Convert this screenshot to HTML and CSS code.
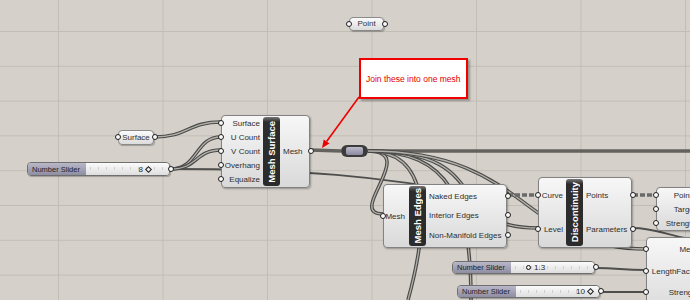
FILE: index.html
```html
<!DOCTYPE html>
<html lang="en">
<head>
  <meta charset="UTF-8" />
  <meta name="viewport" content="width=device-width, initial-scale=1.0" />
  <title>Mesh Definition</title>
  <link rel="stylesheet" href="styles.css">
</head>
<body>

  <div class="canvas">

    <!-- wires sit under the components -->
    <svg class="wires" width="690" height="300" viewBox="0 0 690 300">
      <defs>
        <path id="w-surface" d="M154,137 C188,137 188,122 221,122" />
        <path id="w-ucount" d="M171,169 C198,169 195,137 221,137" />
        <path id="w-vcount" d="M171,169 C198,169 195,150 221,150" />
        <path id="w-edges-in" d="M368,151 C420,151 345,214 383,214" />
        <path id="w-down-a" d="M368,151 C430,151 430,220 408,300" />
        <path id="w-down-b" d="M368,151 C450,151 471,200 471,300" />
        <path id="w-level" d="M368,151 C500,151 440,228 538,228" />
        <path id="w-mes" d="M368,151 C530,151 520,249 646,249" />
      </defs>

      <path class="single" d="M171,169 C300,169 380,176 480,195" />
      <path class="thick" d="M310,150 L341,151" />
      <path class="thick" d="M368,151 L690,151" />

      <use href="#w-surface" class="list-out" />
      <use href="#w-surface" class="list-in" />
      <use href="#w-ucount" class="list-out" />
      <use href="#w-ucount" class="list-in" />
      <use href="#w-vcount" class="list-out" />
      <use href="#w-vcount" class="list-in" />
      <use href="#w-edges-in" class="list-out" />
      <use href="#w-edges-in" class="list-in" />
      <use href="#w-down-a" class="list-out" />
      <use href="#w-down-a" class="list-in" />
      <use href="#w-down-b" class="list-out" />
      <use href="#w-down-b" class="list-in" />
      <use href="#w-level" class="list-out" />
      <use href="#w-level" class="list-in" />
      <use href="#w-mes" class="list-out" />
      <use href="#w-mes" class="list-in" />

      <path class="tree" d="M508,195 L537,195" />
      <path class="tree" d="M633,195 L655,195" />
      <path class="single" d="M632,228 C660,228 670,238 700,240" />
      <path class="single" d="M595,268 C620,268 620,270 646,270" />
      <path class="single" d="M600,292 L646,292" />
    </svg>

    <div class="param param-point">Point</div>
    <div class="param param-surface">Surface</div>

    <div class="slider slider-count">
      <div class="slider-label">Number Slider</div>
      <div class="slider-track track-right pad-wide">
        <span class="slider-value">8</span><span class="mark-diamond"></span>
      </div>
    </div>

    <div class="comp mesh-surface">
      <div class="ins">
        <div class="port">Surface</div>
        <div class="port">U Count</div>
        <div class="port">V Count</div>
        <div class="port">Overhang</div>
        <div class="port">Equalize</div>
      </div>
      <div class="nick"><span>Mesh Surface</span></div>
      <div class="outs">
        <div class="port">Mesh</div>
      </div>
    </div>

    <div class="relay"></div>

    <div class="comp mesh-edges">
      <div class="ins">
        <div class="port">Mesh</div>
      </div>
      <div class="nick"><span>Mesh Edges</span></div>
      <div class="outs">
        <div class="port">Naked Edges</div>
        <div class="port">Interior Edges</div>
        <div class="port">Non-Manifold Edges</div>
      </div>
    </div>

    <div class="comp discontinuity">
      <div class="ins">
        <div class="port">Curve</div>
        <div class="port">Level</div>
      </div>
      <div class="nick"><span>Discontinuity</span></div>
      <div class="outs">
        <div class="port">Points</div>
        <div class="port">Parameters</div>
      </div>
    </div>

    <div class="comp attractor">
      <div class="ins">
        <div class="port">Points</div>
        <div class="port">Target</div>
        <div class="port">Strength</div>
      </div>
      <div class="nick"></div>
    </div>

    <div class="comp smooth">
      <div class="ins">
        <div class="port">Mesh</div>
        <div class="port">LengthFactor</div>
        <div class="port">Strength</div>
      </div>
      <div class="nick"></div>
    </div>

    <div class="slider slider-length">
      <div class="slider-label">Number Slider</div>
      <div class="slider-track track-left">
        <span class="mark-circle"></span><span class="slider-value">1.3</span>
      </div>
    </div>

    <div class="slider slider-strength">
      <div class="slider-label">Number Slider</div>
      <div class="slider-track track-right">
        <span class="slider-value">10</span><span class="mark-diamond"></span>
      </div>
    </div>

    <div class="note">Join these into one mesh</div>

    <svg class="arrow" width="690" height="300" viewBox="0 0 690 300">
      <line x1="359" y1="97" x2="326.6" y2="141.5" />
      <polygon points="322,148 329.5,143.5 323.7,139.5" />
    </svg>

  </div>

</body>
</html>
```

FILE: styles.css
```css
html, body {
  margin: 0;
  padding: 0;
  overflow: hidden;
}

body {
  font-family: "Liberation Sans", Arial, sans-serif;
  color: #262626;
}

.canvas {
  position: relative;
  width: 690px;
  height: 300px;
  overflow: hidden;
  background-color: #d5d1ca;
  background-image:
    linear-gradient(to right, #c2beb6 1px, transparent 1px),
    linear-gradient(to bottom, #c2beb6 1px, transparent 1px);
  background-size: 104.5px 100%, 100% 34.8px;
  background-position: 58px 0, 0 31px;
}

/* wires */
.wires, .arrow {
  position: absolute;
  left: 0;
  top: 0;
}

.wires path, .wires use {
  fill: none;
}

.list-out {
  stroke: #4a4a4a;
  stroke-width: 3.6;
}

.list-in {
  stroke: #b3b0a9;
  stroke-width: 1.3;
}

.single {
  stroke: #4e4e4e;
  stroke-width: 1.8;
}

.thick {
  stroke: #64625e;
  stroke-width: 3.4;
}

.tree {
  stroke: #6a6a6a;
  stroke-width: 3.4;
  stroke-dasharray: 5 2;
}

.arrow {
  z-index: 5;
}

.arrow line {
  stroke: #f00000;
  stroke-width: 1.6;
}

.arrow polygon {
  fill: #f00000;
}

/* grips */
.port, .param {
  position: relative;
}

.ins .port::before,
.outs .port::after,
.param::before,
.param::after,
.slider::after {
  content: "";
  position: absolute;
  top: 50%;
  width: 4px;
  height: 4px;
  margin-top: -3.5px;
  border: 1.5px solid #1e1e1e;
  border-radius: 50%;
  background: #fafafa;
}

.ins .port::before,
.param::before {
  left: -4.5px;
}

.outs .port::after,
.param::after,
.slider::after {
  right: -4.5px;
}

/* parameters */
.param {
  position: absolute;
  box-sizing: border-box;
  height: 14px;
  border: 1px solid #8a8a8a;
  border-radius: 4px;
  background: linear-gradient(#fbfbfb, #dcdcdc);
  box-shadow: 1px 1px 1px rgba(0, 0, 0, 0.25);
  font-size: 8px;
  line-height: 12px;
  text-align: center;
  color: #333;
}

.param-point {
  left: 349px;
  top: 17px;
  width: 35px;
}

.param-surface {
  left: 118px;
  top: 130px;
  width: 36px;
  height: 15px;
  line-height: 13px;
}

/* components */
.comp {
  position: absolute;
  box-sizing: border-box;
  display: flex;
  border: 1px solid #828282;
  border-radius: 4px;
  background: linear-gradient(#f7f7f7, #d9d9d9);
  box-shadow: 1px 1px 2px rgba(0, 0, 0, 0.3);
  font-size: 8px;
  color: #2e2e2e;
}

.ins, .outs {
  display: flex;
  flex-direction: column;
}

.ins .port, .outs .port {
  flex: 1;
  display: flex;
  align-items: center;
  white-space: nowrap;
}

.ins .port {
  justify-content: flex-end;
  padding-right: 3px;
}

.outs {
  flex: 1;
}

.outs .port {
  padding-left: 3px;
}

.nick {
  width: 17px;
  margin: 1px 0;
  border-radius: 3px;
  background: linear-gradient(#777 0, #2d2d2d 5px, #2b2b2b 100%);
  display: flex;
  align-items: center;
  justify-content: center;
}

.nick span {
  writing-mode: vertical-rl;
  transform: rotate(180deg);
  color: #fff;
  font-weight: bold;
  font-size: 9.5px;
  white-space: nowrap;
}

.mesh-surface {
  left: 221px;
  top: 115px;
  width: 89px;
  height: 73px;
}

.mesh-surface .ins {
  width: 41px;
}

.mesh-edges {
  left: 383px;
  top: 184px;
  width: 124px;
  height: 64px;
}

.mesh-edges .ins {
  width: 25px;
}

.mesh-edges .ins .port {
  padding-right: 4px;
}

.mesh-edges .outs {
  padding: 2px 0;
}

.discontinuity {
  left: 538px;
  top: 177px;
  width: 94px;
  height: 71px;
}

.discontinuity .ins {
  width: 27px;
}

.attractor {
  left: 656px;
  top: 187px;
  width: 120px;
  height: 44px;
}

.attractor .ins {
  width: 42px;
}

.smooth {
  left: 646px;
  top: 237px;
  width: 120px;
  height: 80px;
}

.smooth .ins {
  width: 55px;
  padding-top: 1px;
}

.smooth .ins .port {
  flex: none;
  height: 21.5px;
}

/* relay */
.relay {
  position: absolute;
  left: 341px;
  top: 145px;
  width: 27px;
  height: 12px;
  box-sizing: border-box;
  padding: 2px 5px;
  border-radius: 6px;
  background: #3b3b3b;
}

.relay::before {
  content: "";
  display: block;
  height: 100%;
  border-radius: 2px;
  background: linear-gradient(#bdbccb, #8a899f);
}

/* sliders */
.slider {
  position: absolute;
  box-sizing: border-box;
  display: flex;
  width: 143px;
  height: 14px;
  border: 1px solid #6f6f6f;
  border-radius: 4px;
  box-shadow: 1px 1px 1px rgba(0, 0, 0, 0.25);
  font-size: 7.5px;
}

.slider-label {
  width: 58px;
  padding-left: 4px;
  box-sizing: border-box;
  border-radius: 3px 0 0 3px;
  background: linear-gradient(#b9b8c8, #8e8da2);
  color: #1f1f2a;
  display: flex;
  align-items: center;
  white-space: nowrap;
}

.slider-track {
  flex: 1;
  display: flex;
  align-items: center;
  gap: 3px;
  border-radius: 0 3px 3px 0;
  background:
    repeating-linear-gradient(to right, #cfcfcf 0 1px, transparent 1px 8px) 4px 4px / calc(100% - 10px) 3px no-repeat,
    linear-gradient(#fbfbfb, #dedede);
  color: #2a2a2a;
}

.track-right {
  justify-content: flex-end;
  padding-right: 6px;
}

.track-left {
  padding-left: 15px;
}

.pad-wide {
  padding-right: 18px;
}

.slider-value {
  font-size: 8px;
}

.mark-diamond {
  width: 3px;
  height: 3px;
  border: 1.2px solid #222;
  transform: rotate(45deg);
}

.mark-circle {
  width: 3px;
  height: 3px;
  border: 1.5px solid #111;
  border-radius: 50%;
}

.slider-count {
  left: 27px;
  top: 162px;
}

.slider-length {
  left: 452px;
  top: 261px;
  height: 13px;
}

.slider-strength {
  left: 457px;
  top: 285px;
  height: 13px;
}

/* note */
.note {
  position: absolute;
  left: 359px;
  top: 58px;
  width: 109px;
  height: 41px;
  box-sizing: border-box;
  padding-left: 5px;
  border: 2px solid #f20000;
  background: #fff;
  box-shadow: 2px 2px 2px rgba(0, 0, 0, 0.3);
  color: #e00000;
  font-size: 8.5px;
  display: flex;
  align-items: center;
  white-space: nowrap;
  z-index: 4;
}
```
